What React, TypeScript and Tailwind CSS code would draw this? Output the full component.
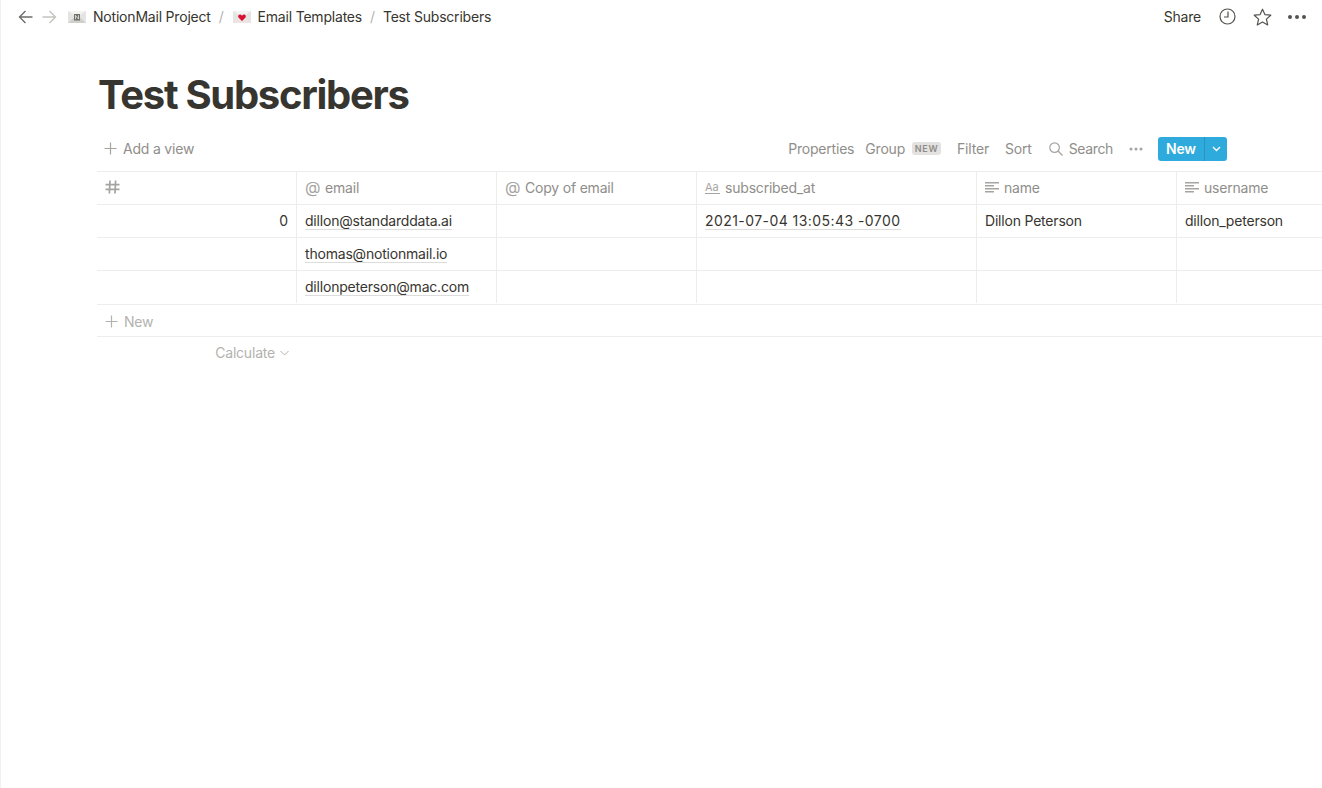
import React from 'react';

const COLS = ['w-[200px]', 'w-[200px]', 'w-[200px]', 'w-[280px]', 'w-[200px]', 'w-[200px]'];

const Envelope: React.FC<{ heart?: boolean }> = ({ heart }) => (
  <svg width="18" height="14" viewBox="0 0 18 14" className="shrink-0">
    <rect x="0" y="1" width="18" height="12" fill="#e4e4e2" />
    <path d="M0 1 L9 7 L18 1 Z" fill="#f3f3f1" />
    <path d="M0 13 L7 6.5 L9 8 L11 6.5 L18 13 Z" fill={heart ? '#efe3e3' : '#cfcfcc'} />
    {heart ? (
      <path d="M9 11 L5.5 7.4 C4.6 6.2 5.4 4.4 7 4.4 C8 4.4 8.6 5 9 5.7 C9.4 5 10 4.4 11 4.4 C12.6 4.4 13.4 6.2 12.5 7.4 Z" fill="#d8132f" />
    ) : (
      <>
        <rect x="6" y="4" width="6" height="6.5" fill="#6f6f6c" />
        <path d="M7.5 5.2 V9.2 M7.5 5.4 L10.5 9 M10.5 5.2 V9.2" stroke="#e8e8e6" strokeWidth="0.8" fill="none" />
      </>
    )}
  </svg>
);

const Plus: React.FC<{ color: string }> = ({ color }) => (
  <svg width="13" height="13" viewBox="0 0 13 13" fill="none" stroke={color} strokeWidth="1.2" className="shrink-0">
    <path d="M6.5 0.5 V12.5 M0.5 6.5 H12.5" />
  </svg>
);

const Dots: React.FC<{ color: string; size: number }> = ({ color, size }) => (
  <svg width={size} height="4" viewBox={`0 0 ${size} 4`} fill={color}>
    <circle cx="2" cy="2" r={size > 15 ? 2 : 1.5} />
    <circle cx={size / 2} cy="2" r={size > 15 ? 2 : 1.5} />
    <circle cx={size - 2} cy="2" r={size > 15 ? 2 : 1.5} />
  </svg>
);

const LinesIcon = () => (
  <svg width="14" height="12" viewBox="0 0 14 12" fill="#a5a4a1" className="shrink-0">
    <rect x="0" y="1" width="14" height="1.5" />
    <rect x="0" y="4" width="9" height="1.5" />
    <rect x="0" y="7" width="14" height="1.5" />
    <rect x="0" y="10" width="9" height="1.5" />
  </svg>
);

const HashIcon = () => (
  <svg width="15" height="14" viewBox="0 0 15 14" fill="none" stroke="#a5a4a1" strokeWidth="1.7" className="shrink-0">
    <path d="M5 0.5 L4.4 13.5 M10.6 0.5 L10 13.5 M0.5 4.6 H14.5 M0.5 9.4 H14.5" />
  </svg>
);

const AtIcon = () => <span className="w-[15px] text-[16px] leading-none text-[#a5a4a1] shrink-0">@</span>;

const TextIcon = () => (
  <span className="w-[15px] text-[11px] leading-[12px] text-[#a5a4a1] border-b border-[#a5a4a1] shrink-0">Aa</span>
);

const HEAD: { icon: React.ReactNode; label: string }[] = [
  { icon: <HashIcon />, label: '' },
  { icon: <AtIcon />, label: 'email' },
  { icon: <AtIcon />, label: 'Copy of email' },
  { icon: <TextIcon />, label: 'subscribed_at' },
  { icon: <LinesIcon />, label: 'name' },
  { icon: <LinesIcon />, label: 'username' },
];

const ROWS = [
  ['0', 'dillon@standarddata.ai', '', '2021-07-04 13:05:43 -0700', 'Dillon Peterson', 'dillon_peterson'],
  ['', 'thomas@notionmail.io', '', '', '', ''],
  ['', 'dillonpeterson@mac.com', '', '', '', ''],
];

// last row sits 1px taller, column rules stop short of its bottom border
const ROW_HEIGHTS = ['h-[33px]', 'h-[33px]', 'h-[34px] pb-[1px]'];

const Underlined: React.FC<{ children: React.ReactNode }> = ({ children }) => (
  <span className="border-b border-[#dcdcda] leading-[17px]">{children}</span>
);

export default function App() {
  return (
    <div className="h-[788px] w-[1322px] overflow-hidden bg-white shadow-[inset_1px_0_0_#f1f1f1] text-[14px] tracking-[-0.2px] text-[#37352f] font-['Inter','Liberation_Sans',sans-serif]">
      {/* Top bar */}
      <div className="h-[33px] flex items-center justify-between pl-[18px] pr-[16px]">
        <div className="flex items-center">
          <svg width="15" height="14" viewBox="0 0 15 14" fill="none" stroke="#6f6e69" strokeWidth="1.4">
            <path d="M14.5 7 H1.5 M7.5 1 L1.5 7 L7.5 13" />
          </svg>
          <svg width="15" height="14" viewBox="0 0 15 14" fill="none" stroke="#c4c3c0" strokeWidth="1.4" className="ml-[9px]">
            <path d="M0.5 7 H13.5 M7.5 1 L13.5 7 L7.5 13" />
          </svg>
          <div className="ml-[11px] flex items-center">
            <Envelope />
            <span className="ml-[7px]">NotionMail Project</span>
            <span className="ml-[8px] text-[#b5b4b0]">/</span>
            <span className="ml-[9px]"><Envelope heart /></span>
            <span className="ml-[7px]">Email Templates</span>
            <span className="ml-[8px] text-[#b5b4b0]">/</span>
            <span className="ml-[8px]">Test Subscribers</span>
          </div>
        </div>
        <div className="flex items-center">
          <span>Share</span>
          <svg width="17" height="17" viewBox="0 0 17 17" fill="none" stroke="#55534e" strokeWidth="1.2" className="ml-[18px]">
            <circle cx="8.5" cy="8.5" r="7.5" />
            <path d="M9 3.5 V9 H5" />
          </svg>
          <svg width="19" height="18" viewBox="0 0 19 18" fill="none" stroke="#55534e" strokeWidth="1.2" strokeLinejoin="round" className="ml-[17px]">
            <path d="M9.5 1.2 L11.9 6.6 L17.8 7.2 L13.4 11.1 L14.7 16.9 L9.5 13.9 L4.3 16.9 L5.6 11.1 L1.2 7.2 L7.1 6.6 Z" />
          </svg>
          <span className="ml-[16px] flex"><Dots color="#55534e" size={18} /></span>
        </div>
      </div>

      {/* Title */}
      <h1 className="mt-[36px] ml-[98px] text-[40px] leading-[52px] font-bold text-[#37352f] tracking-[-1.3px]">Test Subscribers</h1>

      {/* View toolbar */}
      <div className="mt-[6px] mb-[1px] ml-[97px] h-[43px] flex items-center justify-between pr-[95px] text-[#8f8e8a]">
        <div className="flex items-center pl-[7px]">
          <Plus color="#a5a4a1" />
          <span className="ml-[6px]">Add a view</span>
        </div>
        <div className="flex items-center">
          <span>Properties</span>
          <span className="ml-[11px]">Group</span>
          <span className="ml-[7px] h-[13px] w-[29px] text-center rounded-[3px] bg-[#e3e2e0] text-[9px] leading-[13px] font-semibold tracking-[0.7px] text-[#8f8e8a]">NEW</span>
          <span className="ml-[16px]">Filter</span>
          <span className="ml-[16px]">Sort</span>
          <svg width="14" height="14" viewBox="0 0 14 14" fill="none" stroke="#a5a4a1" strokeWidth="1.2" className="ml-[17px]">
            <circle cx="5.6" cy="5.6" r="4.8" />
            <path d="M9 9 L13.5 13.5" />
          </svg>
          <span className="ml-[6px] tracking-[-0.35px]">Search</span>
          <span className="ml-[16px] flex"><Dots color="#a5a4a1" size={14} /></span>
          <div className="ml-[15px] h-[24px] w-[69px] flex rounded-[3px] bg-[#2eaadc] text-white">
            <span className="w-[46px] text-center font-semibold leading-[24px]">New</span>
            <span className="flex-1 flex items-center justify-center border-l border-[#2a93bd]">
              <svg width="9" height="6" viewBox="0 0 9 6" fill="none" stroke="white" strokeWidth="1.4">
                <path d="M1 1 L4.5 4.5 L8 1" />
              </svg>
            </span>
          </div>
        </div>
      </div>

      {/* Table */}
      <div className="ml-[97px] border-t border-[#ededec]">
        <div className="h-[33px] flex border-b border-[#ededec] text-[#8f8e8a]">
          {HEAD.map((h, i) => (
            <div key={i} className={`${COLS[i]} shrink-0 flex items-center gap-[5px] px-[8px] pb-[2px] ${i < 5 ? 'border-r border-[#ededec]' : ''}`}>
              {h.icon}
              <span>{h.label}</span>
            </div>
          ))}
        </div>
        {ROWS.map((row, r) => (
          <div key={r} className={`${ROW_HEIGHTS[r]} flex border-b border-[#ededec]`}>
            {row.map((cell, i) => (
              <div
                key={i}
                className={`${COLS[i]} shrink-0 flex items-center px-[8px] whitespace-nowrap ${i === 0 ? 'justify-end' : ''} ${i === 1 || i === 3 ? '' : 'pb-[2px]'} ${i === 3 ? 'tracking-[0.44px]' : ''} ${i < 5 ? 'border-r border-[#ededec]' : ''}`}
              >
                {cell && (i === 1 || i === 3) ? <Underlined>{cell}</Underlined> : cell}
              </div>
            ))}
          </div>
        ))}
        <div className="h-[32px] flex items-center pl-[8px] pt-[1px] border-b border-[#ededec] text-[#b3b2af]">
          <Plus color="#b3b2af" />
          <span className="ml-[6px]">New</span>
        </div>
        <div className="h-[32px] w-[200px] flex items-center justify-end pr-[8px] pb-[1px] text-[#b3b2af]">
          <span>Calculate</span>
          <svg width="9" height="6" viewBox="0 0 9 6" fill="none" stroke="#b3b2af" strokeWidth="1" className="ml-[5px]">
            <path d="M0.5 1 L4.5 5 L8.5 1" />
          </svg>
        </div>
      </div>
    </div>
  );
}
